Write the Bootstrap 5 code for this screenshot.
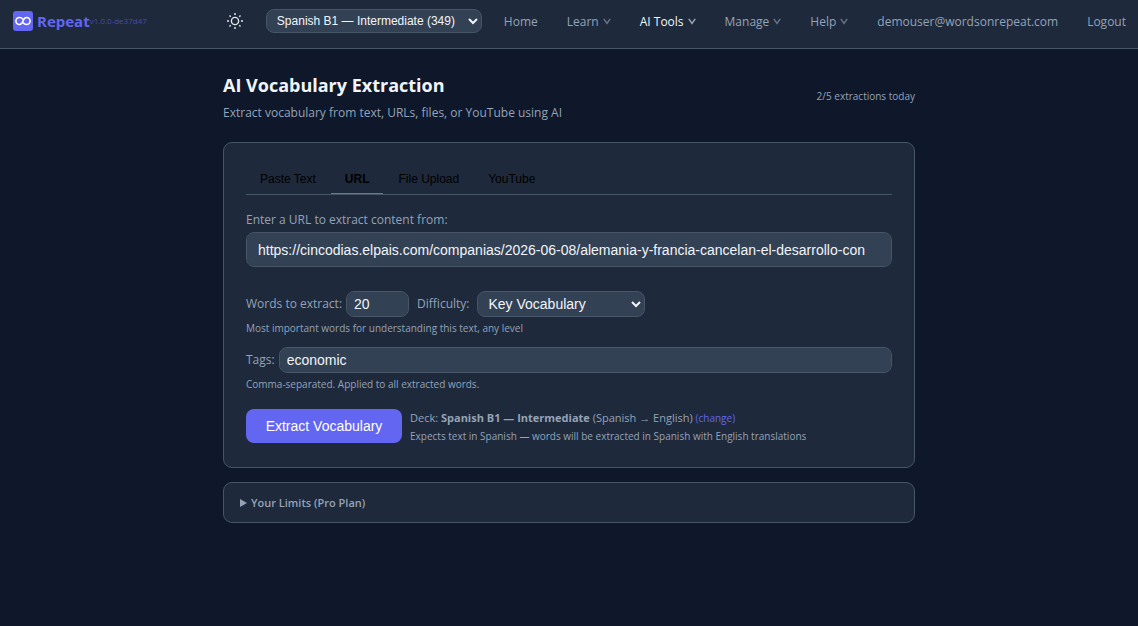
<!DOCTYPE html>
<html lang="en" data-bs-theme="dark">
<head>
<meta charset="utf-8">
<meta name="viewport" content="width=device-width, initial-scale=1">
<title>AI Vocabulary Extraction - Repeat</title>
<link href="https://cdn.jsdelivr.net/npm/bootstrap@5.3.0/dist/css/bootstrap.min.css" rel="stylesheet">
<style>
:root{--page:#0f172a;--surface:#1e293b;--field:#334155;--line:#475569;--muted:#94a3b8;--ink:#f1f5f9;--accent:#6366f1;--ui:"Open Sans","Noto Sans",sans-serif;--control:"Liberation Sans",Arial,sans-serif}
body{background:var(--page);color:var(--muted);font:12px/18px var(--ui)}
a{color:var(--accent);text-decoration:none}
.topbar{background:var(--surface);border-bottom:1px solid var(--line);height:49px;padding:0 12px 6px 13px}
.brand-name{color:var(--accent);font-size:15px;line-height:20px;font-weight:700}
.version{color:var(--accent);opacity:.6;font-size:8px;line-height:18px}
.menu{gap:29px}
.deck-group{gap:23px;margin-right:-7px}
.menu a,.menu button{color:var(--muted);white-space:nowrap}
.menu button{font:inherit;gap:4px}
.menu > a,.menu > button{padding-top:1px!important}
.menu .current{color:var(--ink)}
.chev{opacity:.6}
.field{background-color:var(--field);border:1px solid var(--line);border-radius:8px;color:var(--ink);font-family:var(--control);font-size:14px;line-height:18px}
.field.form-select{background-image:url("data:image/svg+xml,%3Csvg xmlns='http://www.w3.org/2000/svg' viewBox='0 0 10 7'%3E%3Cpath d='M1 1l4 4 4-4' fill='none' stroke='%23f1f5f9' stroke-width='2'/%3E%3C/svg%3E");background-size:10px 7px;background-position:right 3px center}
.deck-select.field{width:216px;height:24px;font-size:12px;line-height:16px;padding:0 16px 0 10px}
.page{max-width:692px;padding-top:25px}
h1{color:var(--ink);font-size:18px;line-height:22px;font-weight:700}
.panel{background:var(--surface);border:1px solid var(--line);border-radius:9px}
.main-panel{padding:21px 22px 23px;margin-top:20px}
.tabs{border-bottom:1px solid var(--line);gap:1px}
.tabs button{font:12px/15px var(--control);color:#000;padding:8px 14px 6px;border:0;border-bottom:1px solid transparent;background:none}
.tabs button.active{font-weight:700;border-bottom-color:var(--accent)}
.url-label{margin-bottom:3px}
.url-field{height:35px;padding:0 11px}
.short{height:26px;padding:0 7px}
.count{width:63px}
.level{width:168px;padding:0 20px 0 10px}
.hint{font-size:10px;line-height:16px}
.note{margin:3px 0 11px}
.deck{font-size:11px;line-height:20px}
.go{background:var(--accent);color:#fff;border:0;border-radius:8px;height:34px;width:156px;padding:0;font:14px/18px var(--control)}
.go:hover{background:#4f46e5;color:#fff}
.limits{margin-top:14px}
summary{list-style:none;padding:11px 15px;font-size:11px;line-height:17px;font-weight:600}
summary::-webkit-details-marker{display:none}
</style>
</head>
<body>
<nav class="topbar d-flex align-items-center justify-content-between">
  <a href="#" class="d-flex align-items-center">
    <svg width="20" height="20" viewBox="0 0 20 20" class="me-1" aria-hidden="true"><rect width="20" height="20" rx="3" fill="#6366f1"/><path d="M10 8.300C9 7 7.800 6.500 6.400 6.500a3.500 3.500 0 0 0 0 7C8.800 13.500 9.400 11.600 10 10s1.200-3.500 3.600-3.500a3.500 3.500 0 0 1 0 7C12.200 13.500 11 13 10 11.700" fill="none" stroke="#fff" stroke-width="1.600"/></svg>
    <span class="brand-name">Repeat</span><span class="version">v1.0.0-de37d47</span>
  </a>
  <div class="menu d-flex align-items-center">
    <div class="deck-group d-flex align-items-center">
      <button type="button" class="btn p-0 border-0 d-flex" aria-label="Toggle theme">
        <svg width="16" height="16" viewBox="0 0 16 16" fill="none" stroke="#e2e8f0" stroke-width="1.400"><circle cx="8" cy="8" r="3.600"/><path d="M8 0v2M8 14v2M0 8h2M14 8h2M2.500 2.500l1.200 1.200M12.300 12.300l1.200 1.200M2.500 13.500l1.200-1.200M12.300 3.700l1.200-1.200"/></svg>
      </button>
      <select class="form-select field deck-select" aria-label="Active deck"><option>Spanish B1 — Intermediate (349)</option></select>
    </div>
    <a href="#">Home</a>
    <button type="button" class="btn p-0 border-0 d-flex align-items-center">Learn<svg class="chev" width="8" height="7" viewBox="0 0 8 7" fill="none" stroke="currentColor" stroke-width="1.500"><path d="M.8.8 4 5.500 7.200.8"/></svg></button>
    <button type="button" class="btn p-0 border-0 d-flex align-items-center current">AI Tools<svg class="chev" width="8" height="7" viewBox="0 0 8 7" fill="none" stroke="currentColor" stroke-width="1.500"><path d="M.8.8 4 5.500 7.200.8"/></svg></button>
    <button type="button" class="btn p-0 border-0 d-flex align-items-center">Manage<svg class="chev" width="8" height="7" viewBox="0 0 8 7" fill="none" stroke="currentColor" stroke-width="1.500"><path d="M.8.8 4 5.500 7.200.8"/></svg></button>
    <button type="button" class="btn p-0 border-0 d-flex align-items-center">Help<svg class="chev" width="8" height="7" viewBox="0 0 8 7" fill="none" stroke="currentColor" stroke-width="1.500"><path d="M.8.8 4 5.500 7.200.8"/></svg></button>
    <a href="#">demouser@wordsonrepeat.com</a>
    <a href="#">Logout</a>
  </div>
</nav>
<main class="page container-fluid px-0">
  <header class="d-flex justify-content-between align-items-center">
    <div><h1 class="mb-2">AI Vocabulary Extraction</h1><p class="mb-0">Extract vocabulary from text, URLs, files, or YouTube using AI</p></div>
    <span class="hint pb-1">2/5 extractions today</span>
  </header>
  <section class="panel main-panel">
    <div class="tabs d-flex" role="tablist">
      <button type="button" role="tab">Paste Text</button><button type="button" role="tab" class="active" aria-selected="true">URL</button><button type="button" role="tab">File Upload</button><button type="button" role="tab">YouTube</button>
    </div>
    <form>
      <label for="url" class="url-label d-block mt-3">Enter a URL to extract content from:</label>
      <input id="url" type="text" class="form-control field url-field" value="https://cincodias.elpais.com/companias/2026-06-08/alemania-y-francia-cancelan-el-desarrollo-con">
      <div class="d-flex align-items-center mt-4">
        <label for="words" class="me-1">Words to extract:</label>
        <input id="words" type="text" inputmode="numeric" class="form-control field short count" value="20">
        <label for="level" class="mx-2">Difficulty:</label>
        <select id="level" class="form-select field short level"><option>Key Vocabulary</option></select>
      </div>
      <p class="hint note">Most important words for understanding this text, any level</p>
      <div class="d-flex align-items-center">
        <label for="tags" class="me-1">Tags:</label>
        <input id="tags" type="text" class="form-control field short" value="economic">
      </div>
      <p class="hint note mb-3">Comma-separated. Applied to all extracted words.</p>
      <div class="d-flex align-items-center gap-2">
        <button type="button" class="btn go flex-shrink-0">Extract Vocabulary</button>
        <div><div class="deck">Deck: <strong>Spanish B1 — Intermediate</strong> (Spanish → English) <a href="#" class="hint">(change)</a></div>
        <div class="hint">Expects text in Spanish — words will be extracted in Spanish with English translations</div></div>
      </div>
    </form>
  </section>
  <details class="panel limits">
    <summary class="d-flex align-items-center"><svg class="me-1" width="8" height="8" viewBox="0 0 8 8" fill="currentColor" aria-hidden="true"><path d="M1 0 8 4 1 8Z"/></svg>Your Limits (Pro Plan)</summary>
  </details>
</main>
<script src="https://cdn.jsdelivr.net/npm/bootstrap@5.3.0/dist/js/bootstrap.bundle.min.js"></script>
</body>
</html>
